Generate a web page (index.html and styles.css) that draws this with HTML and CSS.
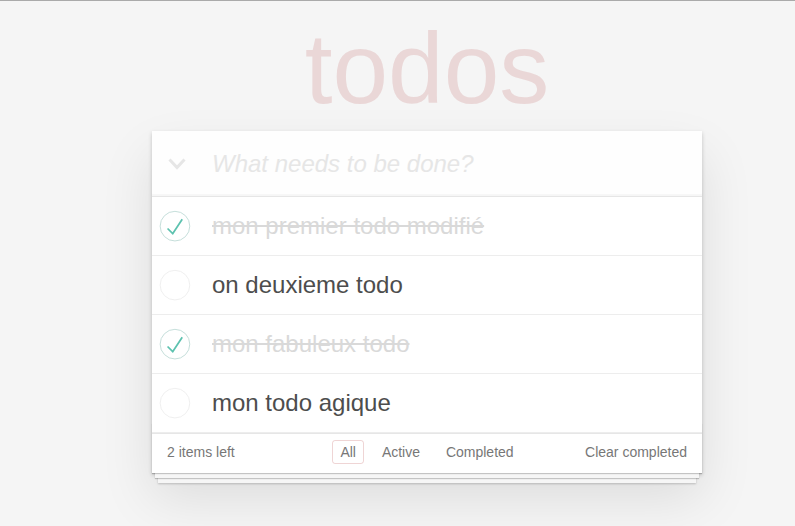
FILE: index.html
```html
<!DOCTYPE html>
<html lang="fr">
<head>
<meta charset="utf-8">
<title>todos</title>
<link rel="stylesheet" href="styles.css">
</head>
<body>
<div class="page">
  <h1 class="title">todos</h1>
  <section class="todoapp">
    <header class="header">
      <span class="toggle-all" aria-label="Mark all as complete">
        <svg width="18" height="12" viewBox="0 0 18 12"><polyline points="1.5,1.5 9,9.5 16.5,1.5" fill="none" stroke="#e6e6e6" stroke-width="3"/></svg>
      </span>
      <input class="new-todo" placeholder="What needs to be done?">
    </header>
    <section class="main">
      <ul class="todo-list">
        <li class="todo completed">
          <svg class="toggle" width="40" height="40" viewBox="-10 -18 100 135"><circle cx="50" cy="50" r="50" fill="none" stroke="#bddad5" stroke-width="3"/><path fill="#5dc2af" d="M72 25L42 71 27 56l-4 4 20 20 34-52z"/></svg>
          <label class="todo-label">mon premier todo modifié</label>
        </li>
        <li class="todo">
          <svg class="toggle" width="40" height="40" viewBox="-10 -18 100 135"><circle cx="50" cy="50" r="50" fill="none" stroke="#ededed" stroke-width="3"/></svg>
          <label class="todo-label">on deuxieme todo</label>
        </li>
        <li class="todo completed">
          <svg class="toggle" width="40" height="40" viewBox="-10 -18 100 135"><circle cx="50" cy="50" r="50" fill="none" stroke="#bddad5" stroke-width="3"/><path fill="#5dc2af" d="M72 25L42 71 27 56l-4 4 20 20 34-52z"/></svg>
          <label class="todo-label">mon fabuleux todo</label>
        </li>
        <li class="todo">
          <svg class="toggle" width="40" height="40" viewBox="-10 -18 100 135"><circle cx="50" cy="50" r="50" fill="none" stroke="#ededed" stroke-width="3"/></svg>
          <label class="todo-label">mon todo agique</label>
        </li>
      </ul>
    </section>
    <footer class="footer">
      <span class="todo-count"><strong class="count-num">2</strong> items left</span>
      <span class="filters">
        <a class="filter selected" href="#/">All</a>
        <a class="filter" href="#/active">Active</a>
        <a class="filter" href="#/completed">Completed</a>
      </span>
      <span class="clear-wrap"><button class="clear-completed">Clear completed</button></span>
    </footer>
  </section>
</div>
</body>
</html>
```
FILE: styles.css
```css
html, body {
  margin: 0;
  padding: 0;
}

body {
  font-family: "Liberation Sans", Arial, Helvetica, sans-serif;
  font-size: 14px;
  line-height: 19px;
  background: #f5f5f5;
  color: #4d4d4d;
  border-top: 1px solid #aaaaaa;
}

.page {
  width: 550px;
  margin-left: 152px;
  padding-bottom: 60px;
}

.title {
  margin: 17px 0 13px 0;
  font-size: 100px;
  line-height: 100px;
  font-weight: 100;
  text-align: center;
  color: rgba(175, 47, 47, 0.15);
}

.todoapp {
  position: relative;
  background: #fff;
  box-shadow: 0 2px 4px 0 rgba(0, 0, 0, 0.2), 0 25px 50px 0 rgba(0, 0, 0, 0.1);
}

.header {
  display: flex;
  align-items: center;
  background: rgba(0, 0, 0, 0.003);
  box-shadow: inset 0 -2px 1px rgba(0, 0, 0, 0.03);
}

.toggle-all {
  display: flex;
  align-items: center;
  width: 44px;
  padding-left: 16px;
  height: 65px;
}

.toggle-all svg {
  display: block;
  margin-top: 1px;
}

.new-todo {
  flex: 1;
  min-width: 0;
  margin: 0;
  border: none;
  outline: none;
  background: transparent;
  padding: 16px 16px 16px 0;
  height: 33px;
  line-height: 33px;
  font-family: inherit;
  font-size: 24px;
  color: inherit;
  box-sizing: content-box;
}

.new-todo::placeholder {
  font-style: italic;
  font-weight: 300;
  color: #e6e6e6;
}

.main {
  position: relative;
  z-index: 2;
  border-top: 1px solid #e6e6e6;
}

.todo-list {
  margin: 0;
  padding: 0;
  list-style: none;
}

.todo {
  display: flex;
  align-items: center;
  font-size: 24px;
  border-bottom: 1px solid #ededed;
}

.toggle {
  flex: none;
  display: block;
}

.todo-label {
  display: block;
  flex: 1;
  padding: 15px 15px 15px 20px;
  line-height: 28px;
  color: #4d4d4d;
}

.completed .todo-label {
  color: #d9d9d9;
  text-decoration: line-through;
}

.footer {
  position: relative;
  display: flex;
  color: #777;
  padding: 9px 15px 11px 15px;
  height: 19px;
  line-height: 19px;
  border-top: 1px solid #e6e6e6;
}

.footer::before {
  content: '';
  position: absolute;
  right: 0;
  bottom: 0;
  left: 0;
  height: 50px;
  overflow: hidden;
  box-shadow: 0 1px 1px rgba(0, 0, 0, 0.2),
              0 8px 0 -3px #f6f6f6,
              0 9px 1px -3px rgba(0, 0, 0, 0.2),
              0 16px 0 -6px #f6f6f6,
              0 17px 2px -6px rgba(0, 0, 0, 0.2);
}

.todo-count {
  flex: 1 1 0;
  text-align: left;
}

.count-num {
  font-weight: 300;
}

.filters {
  flex: none;
  text-align: center;
  white-space: nowrap;
}

.filter {
  color: inherit;
  margin: 3px;
  padding: 3px 7px;
  text-decoration: none;
  border: 1px solid transparent;
  border-radius: 3px;
}

.filter.selected {
  border-color: rgba(175, 47, 47, 0.2);
}

.clear-wrap {
  flex: 1 1 0;
  text-align: right;
}

.clear-completed {
  margin: 0;
  padding: 0;
  border: 0;
  background: none;
  font-family: inherit;
  font-size: 14px;
  line-height: 19px;
  color: inherit;
  cursor: pointer;
}
```
